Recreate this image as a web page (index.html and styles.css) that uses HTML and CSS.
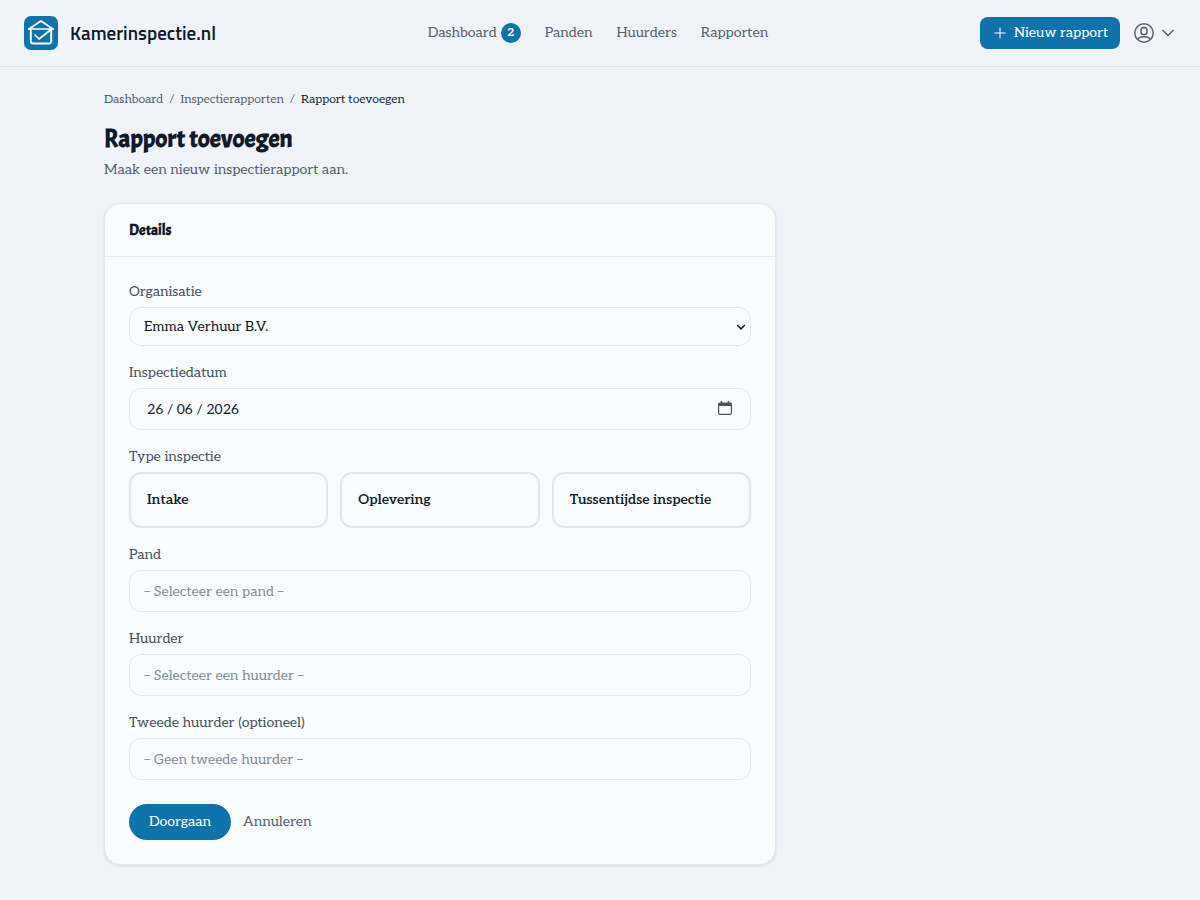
FILE: index.html
```html
<!DOCTYPE html>
<html lang="nl">
<head>
<meta charset="UTF-8">
<meta name="viewport" content="width=device-width, initial-scale=1.0">
<title>Rapport toevoegen - Kamerinspectie.nl</title>
<link rel="stylesheet" href="styles.css">
</head>
<body>
<header class="topbar">
    <a class="brand" href="#">
        <svg class="brand-logo" viewBox="0 0 34 34" fill="none" stroke="#fff" stroke-width="2" stroke-linecap="round" stroke-linejoin="round" aria-hidden="true">
            <rect width="34" height="34" rx="7" fill="#0e73aa" stroke="none"/>
            <path d="M5 13 17 5l12 8"/>
            <path d="M6.800 13v12a2.500 2.500 0 0 0 2.500 2.500h15.400a2.500 2.500 0 0 0 2.500-2.500V13"/>
            <path d="M5 13h24" stroke-width="1.500"/>
            <path d="m11 19 4 4 11.500-9" stroke-width="1.700"/>
        </svg>
        <span class="brand-name">Kamerinspectie.nl</span>
    </a>
    <nav class="menu">
        <a href="#">Dashboard <span class="badge">2</span></a>
        <a href="#">Panden</a>
        <a href="#">Huurders</a>
        <a href="#">Rapporten</a>
    </nav>
    <div class="actions">
        <a class="new-report" href="#">
            <svg width="16" height="16" viewBox="0 0 16 16" fill="none" stroke="currentColor" aria-hidden="true">
                <path d="M8 2.500v11M2.500 8h11"/>
            </svg>
            Nieuw rapport
        </a>
        <button class="account" type="button" aria-label="Account">
            <svg width="20" height="20" viewBox="0 0 20 20" fill="none" stroke="currentColor" stroke-width="1.500" aria-hidden="true">
                <circle cx="10" cy="10" r="9.200"/>
                <rect x="7" y="4.500" width="6" height="7" rx="2.600"/>
                <path d="M3.700 16.600c1-2 3.500-2.800 6.300-2.800s5.300.8 6.300 2.800"/>
            </svg>
            <svg width="12" height="12" viewBox="0 0 12 12" fill="none" stroke="currentColor" stroke-width="1.500" stroke-linecap="round" stroke-linejoin="round" aria-hidden="true">
                <path d="m1 3.500 5 5 5-5"/>
            </svg>
        </button>
    </div>
</header>

<main class="container">
    <nav class="breadcrumb" aria-label="Kruimelpad">
        <a href="#">Dashboard</a>
        <span>/</span>
        <a href="#">Inspectierapporten</a>
        <span>/</span>
        <span class="current">Rapport toevoegen</span>
    </nav>
    <h1>Rapport toevoegen</h1>
    <p class="intro">Maak een nieuw inspectierapport aan.</p>

    <section class="card">
        <h2>Details</h2>
        <form class="card-body">
            <div class="field">
                <label for="organisatie">Organisatie</label>
                <div class="control">
                    <select id="organisatie" name="organisatie">
                        <option>Emma Verhuur B.V.</option>
                    </select>
                    <svg class="select-arrow" width="10" height="10" viewBox="0 0 10 10" fill="none" stroke="currentColor" stroke-width="1.600" aria-hidden="true">
                        <path d="m1.200 3 3.800 3.800L8.800 3"/>
                    </svg>
                </div>
            </div>

            <div class="field">
                <label for="datum">Inspectiedatum</label>
                <div class="control">
                    <input class="date" type="text" id="datum" name="datum" value="26 / 06 / 2026">
                    <button class="calendar" type="button" aria-label="Kies een datum">
                        <svg width="14" height="14" viewBox="0 0 14 14" fill="none" stroke="currentColor" aria-hidden="true">
                            <rect x=".6" y="2" width="12.800" height="11.300" rx="1.200" stroke-width="1.200"/>
                            <path d="M.6 3.500h12.800" stroke-width="3"/>
                            <path d="M3.500 0v3M10.500 0v3" stroke-width="1.500"/>
                        </svg>
                    </button>
                </div>
            </div>

            <fieldset class="field">
                <legend>Type inspectie</legend>
                <div class="types">
                    <label class="type"><input type="radio" name="type" value="intake">Intake</label>
                    <label class="type"><input type="radio" name="type" value="oplevering">Oplevering</label>
                    <label class="type"><input type="radio" name="type" value="tussentijds">Tussentijdse inspectie</label>
                </div>
            </fieldset>

            <div class="field">
                <label for="pand">Pand</label>
                <input type="text" id="pand" name="pand" placeholder="– Selecteer een pand –">
            </div>

            <div class="field">
                <label for="huurder">Huurder</label>
                <input type="text" id="huurder" name="huurder" placeholder="– Selecteer een huurder –">
            </div>

            <div class="field">
                <label for="huurder2">Tweede huurder (optioneel)</label>
                <input type="text" id="huurder2" name="huurder2" placeholder="– Geen tweede huurder –">
            </div>

            <div class="buttons">
                <button class="submit" type="submit">Doorgaan</button>
                <a class="cancel" href="#">Annuleren</a>
            </div>
        </form>
    </section>
</main>
</body>
</html>
```
FILE: styles.css
```css
* {
    box-sizing: border-box;
}
body {
    margin: 0;
    background-color: #f0f4f9;
    color: #0f1b2a;
    font-family: Aleo, 'Liberation Serif', serif;
    font-size: 14px;
    line-height: 22px;
}
a {
    color: inherit;
    text-decoration: none;
}
svg {
    display: block;
    flex: none;
}
input,
select,
button {
    font: inherit;
    color: inherit;
}

/* header */
.topbar {
    display: flex;
    justify-content: space-between;
    align-items: center;
    padding: 16px 24px;
    border-bottom: 1px solid #e0e6ee;
}
.brand {
    display: flex;
    align-items: center;
    gap: 12px;
}
.brand-logo {
    width: 34px;
    height: 34px;
}
.brand-name {
    font-family: 'Titillium Web', Roboto, sans-serif;
    font-size: 19px;
    font-weight: 600;
}
.menu {
    display: flex;
    gap: 24px;
    color: #56616f;
}
.menu a {
    display: flex;
    align-items: center;
    gap: 4px;
}
.badge {
    width: 20px;
    height: 20px;
    border-radius: 50%;
    background-color: #0e73aa;
    color: #fff;
    font-size: 12px;
    font-weight: bold;
    line-height: 20px;
    text-align: center;
}
.actions {
    display: flex;
    align-items: center;
    gap: 12px;
}
.new-report {
    display: flex;
    align-items: center;
    gap: 6px;
    padding: 5px 12px;
    border-radius: 8px;
    background-color: #0e73aa;
    color: #fff;
}
.account {
    display: flex;
    align-items: center;
    gap: 8px;
    padding: 2px;
    border: none;
    background: none;
    color: #56616f;
    cursor: pointer;
}

/* page */
.container {
    max-width: 1024px;
    margin: 0 auto;
    padding: 24px 16px 35px;
}
.breadcrumb {
    display: flex;
    gap: 6px;
    margin-bottom: 14px;
    color: #56616f;
    font-size: 12px;
    line-height: 18px;
}
.breadcrumb .current {
    color: #1e293b;
}
h1 {
    margin: 0 0 4px;
    font-family: Acme, Lato, sans-serif;
    font-size: 25px;
    font-weight: bold;
    line-height: 32px;
}
.intro {
    margin: 0 0 22px;
    color: #56616f;
}
.card {
    max-width: 672px;
    border: 1px solid #e0e7f0;
    border-radius: 16px;
    background-color: #f9fbfd;
    box-shadow: 0 1px 3px rgba(15, 23, 42, 0.12);
}
h2 {
    margin: 0;
    padding: 16px 24px 14px;
    border-bottom: 1px solid #dfe7f0;
    font-family: Acme, Lato, sans-serif;
    font-size: 15px;
    font-weight: bold;
    line-height: 22px;
}
.card-body {
    padding: 24px;
}

/* form */
.field {
    min-width: 0;
    margin: 0 0 16px;
    padding: 0;
    border: none;
}
.field > label,
legend {
    display: block;
    margin-bottom: 4px;
    padding: 0;
    color: #475262;
}
.control {
    position: relative;
}
input[type="text"],
select {
    display: block;
    width: 100%;
    height: 42px;
    padding: 0 14px;
    border: 1px solid #dfe7f0;
    border-radius: 12px;
    background-color: #f9fbfd;
}
select {
    height: 39px;
    appearance: none;
}
input.date {
    padding: 0 17px;
}
input::placeholder {
    color: #858d97;
    opacity: 1;
}
.select-arrow {
    position: absolute;
    top: 15px;
    right: 5px;
    pointer-events: none;
}
.calendar {
    position: absolute;
    top: 13px;
    right: 19px;
    padding: 0;
    border: none;
    background: none;
    color: #475262;
}
.types {
    display: grid;
    grid-template-columns: repeat(3, 1fr);
    gap: 12px;
}
.type {
    padding: 15px 16px;
    border: 2px solid #dfe7f0;
    border-radius: 12px;
    font-weight: 600;
    cursor: pointer;
}
.type input {
    position: absolute;
    margin: 0;
    opacity: 0;
}
.type:has(input:checked) {
    border-color: #0e73aa;
}
.buttons {
    display: flex;
    align-items: center;
    gap: 12px;
    margin-top: 24px;
}
.submit {
    padding: 7px 20px;
    border: none;
    border-radius: 18px;
    background-color: #0e73aa;
    color: #fff;
    cursor: pointer;
}
.cancel {
    color: #56616f;
}
```
